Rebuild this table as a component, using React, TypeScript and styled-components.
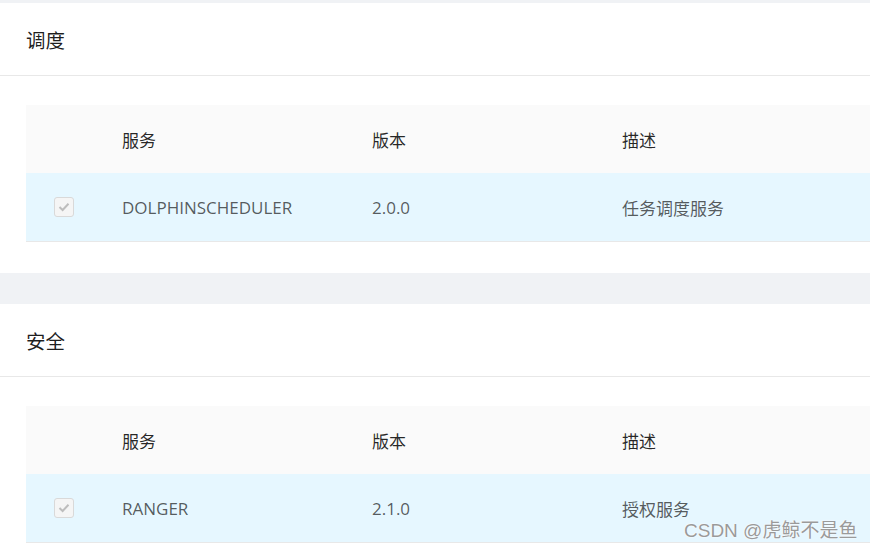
import React from "react";
import styled, { createGlobalStyle } from "styled-components";

const Global = createGlobalStyle`
  html, body { margin: 0; padding: 0; }
  body {
    background: #f0f2f5;
    font-family: "Open Sans", "Noto Sans CJK SC", sans-serif;
    -webkit-font-smoothing: antialiased;
  }
`;

const Page = styled.div`
  width: 870px;
  height: 549px;
  overflow: hidden;
  padding-top: 3px;
  box-sizing: border-box;
  display: flex;
  flex-direction: column;
  gap: 31px;
`;

const Card = styled.section`
  background: #fff;
  flex-shrink: 0;
`;

const CardHeader = styled.div`
  height: 72px;
  display: flex;
  align-items: center;
  padding-left: 26px;
  border-bottom: 1px solid #e8e8e8;
  font-family: "Noto Sans CJK SC", sans-serif;
  font-size: 19.5px;
  color: rgba(0, 0, 0, 0.88);
`;

const CardBody = styled.div`
  padding: 29px 0 31px 26px;
`;

const Table = styled.div`
  display: flex;
  flex-direction: column;
`;

const Row = styled.div<{ $head?: boolean }>`
  display: grid;
  grid-template-columns: 77px 250px 250px 1fr;
  height: ${(p) => (p.$head ? "68px" : "69px")};
  background: ${(p) => (p.$head ? "#fafafa" : "#e6f7ff")};
  border-bottom: ${(p) => (p.$head ? "none" : "1px solid #e8e8e8")};
  box-sizing: border-box;
  color: ${(p) => (p.$head ? "rgba(0,0,0,0.85)" : "rgba(0,0,0,0.65)")};
  font-size: 17px;
`;

const Cell = styled.div`
  display: flex;
  align-items: center;
  padding-left: 19px;
  white-space: nowrap;
`;

const CheckCell = styled.div`
  display: flex;
  align-items: center;
  justify-content: center;
  padding-right: 2px;
`;

const Checkbox = styled.span`
  width: 18px;
  height: 18px;
  border: 1px solid #d9d9d9;
  border-radius: 3px;
  background: #f5f5f5;
  display: flex;
  align-items: center;
  justify-content: center;
`;

const Watermark = styled.div`
  position: absolute;
  left: 684px;
  top: 515px;
  font-family: "Liberation Sans", "Noto Sans CJK SC", sans-serif;
  font-size: 19px;
  color: #9a9a9a;
  text-shadow: 0 0 1px #fff, 0 0 2px #fff;
  white-space: nowrap;
`;

const Wrap = styled.div`
  position: relative;
`;

const Check = () => (
  <Checkbox>
    <svg width="12" height="10" viewBox="0 0 12 10">
      <path d="M1.5 5 L4.6 8 L10.5 1.8" fill="none" stroke="#bdbdbd" strokeWidth="2" />
    </svg>
  </Checkbox>
);

type Svc = { name: string; version: string; desc: string };

const Section = ({ title, svc }: { title: string; svc: Svc }) => (
  <Card>
    <CardHeader>{title}</CardHeader>
    <CardBody>
      <Table>
        <Row $head>
          <CheckCell />
          <Cell>服务</Cell>
          <Cell>版本</Cell>
          <Cell>描述</Cell>
        </Row>
        <Row>
          <CheckCell>
            <Check />
          </CheckCell>
          <Cell>{svc.name}</Cell>
          <Cell>{svc.version}</Cell>
          <Cell>{svc.desc}</Cell>
        </Row>
      </Table>
    </CardBody>
  </Card>
);

export default function App() {
  return (
    <Wrap>
      <Global />
      <Page>
        <Section title="调度" svc={{ name: "DOLPHINSCHEDULER", version: "2.0.0", desc: "任务调度服务" }} />
        <Section title="安全" svc={{ name: "RANGER", version: "2.1.0", desc: "授权服务" }} />
      </Page>
      <Watermark>CSDN @虎鲸不是鱼</Watermark>
    </Wrap>
  );
}
